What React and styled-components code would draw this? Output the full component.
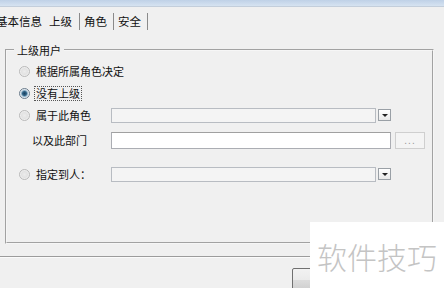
import React from 'react';
import styled, { createGlobalStyle } from 'styled-components';

const GlobalStyle = createGlobalStyle`
  html, body {
    margin: 0;
    padding: 0;
    background: #f0f0f0;
  }
  body {
    font-family: "Noto Sans CJK SC", "Liberation Sans", sans-serif;
    font-size: 11px;
    color: #111;
  }
`;

const Window = styled.div`
  position: relative;
  width: 444px;
  height: 288px;
  overflow: hidden;
  background: #f0f0f0;
`;

const TitleStrip = styled.div`
  height: 6px;
  background: linear-gradient(180deg, #bfd1e7 0%, #d6e3f1 100%);
  border-bottom: 1px solid #c3cedb;
`;

const TabBar = styled.div`
  display: flex;
  align-items: center;
  height: 29px;
  margin-left: -4px;
  font-size: 11.5px;
`;

const Tab = styled.div`
  display: flex;
  align-items: center;
  height: 17px;
  line-height: 17px;
  padding: ${(p) => (p.$first ? '0 7px 0 0' : p.$active ? '0 7px 0 0' : '0 6px 0 4px')};
  border-right: ${(p) => (p.$sep ? '1px solid #8a8a8a' : 'none')};
  white-space: nowrap;
`;

const GroupBox = styled.fieldset`
  box-sizing: border-box;
  height: 200px;
  margin: 8px 10px 0 5px;
  padding: 0;
  border: 2px groove #f6f6f6;
  min-width: 0;
`;

const Legend = styled.legend`
  margin-left: 7px;
  padding: 0 3px;
  line-height: 12px;
  font-size: 11px;
`;

const Body = styled.div`
  display: flex;
  flex-direction: column;
  padding: 4px 0 0 12px;
`;

const Row = styled.div`
  display: grid;
  grid-template-columns: 17px 75px 280px 4px 30px;
  align-items: center;
  height: ${(p) => p.$h}px;
  margin-top: ${(p) => p.$mt || 0}px;
`;

const Radio = styled.span`
  box-sizing: border-box;
  width: 11px;
  height: 11px;
  border-radius: 50%;
  border: 1px solid ${(p) => (p.$checked ? '#6b7c8c' : '#b9b9b9')};
  background: ${(p) =>
    p.$checked
      ? 'radial-gradient(circle at 50% 50%, #1c3f5e 0, #2e6386 2px, #b9cfe0 3.5px, #f4f6f8 4.5px)'
      : 'radial-gradient(circle at 50% 50%, #ececec 0, #e2e2e2 3px, #f7f7f7 5px)'};
`;

const Label = styled.span`
  justify-self: start;
  white-space: nowrap;
  line-height: 13px;
  padding: 0 1px;
  margin-left: ${(p) => (p.$indent ? '12px' : '-1px')};
  outline: ${(p) => (p.$focus ? '1px dotted #555' : 'none')};
  grid-column: ${(p) => (p.$span ? '1 / 3' : 'auto')};
`;

const Combo = styled.div`
  display: flex;
  align-items: center;
  gap: 2px;
  height: 15px;
`;

const ComboField = styled.div`
  flex: 1;
  height: 15px;
  box-sizing: border-box;
  border: 1px solid #b8bcc2;
  background: #f4f4f4;
`;

const ComboButton = styled.div`
  box-sizing: border-box;
  width: 13px;
  height: 12px;
  border: 1px solid #9aa0a6;
  background: linear-gradient(180deg, #ffffff, #e8e8e8);
  display: flex;
  align-items: center;
  justify-content: center;

  &::after {
    content: '';
    border-left: 3px solid transparent;
    border-right: 3px solid transparent;
    border-top: 3px solid #222;
  }
`;

const TextInput = styled.div`
  box-sizing: border-box;
  height: 17px;
  border: 1px solid #abadb3;
  border-top-color: #a0a0a0;
  background: #fff;
`;

const DotsButton = styled.div`
  grid-column: 5;
  box-sizing: border-box;
  height: 17px;
  border: 1px solid #cfcfcf;
  background: #f4f4f4;
  color: #999;
  font-family: "Liberation Sans", sans-serif;
  font-size: 10px;
  letter-spacing: 1px;
  display: flex;
  align-items: center;
  justify-content: center;
`;

const Separator = styled.div`
  margin-top: 12px;
  height: 1px;
  background: #9c9c9c;
  border-bottom: 1px solid #fbfbfb;
`;

const Footer = styled.div`
  display: flex;
  gap: 6px;
  padding: 10px 0 0 292px;
`;

const Button = styled.div`
  box-sizing: border-box;
  width: 75px;
  height: 23px;
  border: 1px solid #707070;
  border-radius: 2px;
  background: linear-gradient(180deg, #f2f2f2 0%, #ebebeb 50%, #dddddd 51%, #cfcfcf 100%);
`;

const Watermark = styled.div`
  position: absolute;
  right: 0;
  bottom: 0;
  width: 134px;
  height: 66px;
  background: #fff;
  color: #c4c4c4;
  font-family: "Noto Sans CJK SC", sans-serif;
  font-size: 30px;
  font-weight: 300;
  display: flex;
  align-items: center;
  justify-content: center;
  padding-top: 2px;
  box-sizing: border-box;
`;

function ComboBox() {
  return (
    <Combo>
      <ComboField />
      <ComboButton />
    </Combo>
  );
}

export default function App() {
  return (
    <Window>
      <GlobalStyle />
      <TitleStrip />
      <TabBar>
        <Tab $first>基本信息</Tab>
        <Tab $active $sep>上级</Tab>
        <Tab $sep>角色</Tab>
        <Tab $sep>安全</Tab>
      </TabBar>

      <GroupBox>
        <Legend>上级用户</Legend>
        <Body>
          <Row $h={22}>
            <Radio />
            <Label>根据所属角色决定</Label>
          </Row>
          <Row $h={22}>
            <Radio $checked />
            <Label $focus>没有上级</Label>
          </Row>
          <Row $h={22}>
            <Radio />
            <Label>属于此角色</Label>
            <ComboBox />
          </Row>
          <Row $h={24} $mt={2}>
            <Label $indent $span>以及此部门</Label>
            <TextInput />
            <DotsButton>...</DotsButton>
          </Row>
          <Row $h={22} $mt={11}>
            <Radio />
            <Label>指定到人：</Label>
            <ComboBox />
          </Row>
        </Body>
      </GroupBox>

      <Separator />
      <Footer>
        <Button />
        <Button />
      </Footer>

      <Watermark>软件技巧</Watermark>
    </Window>
  );
}
